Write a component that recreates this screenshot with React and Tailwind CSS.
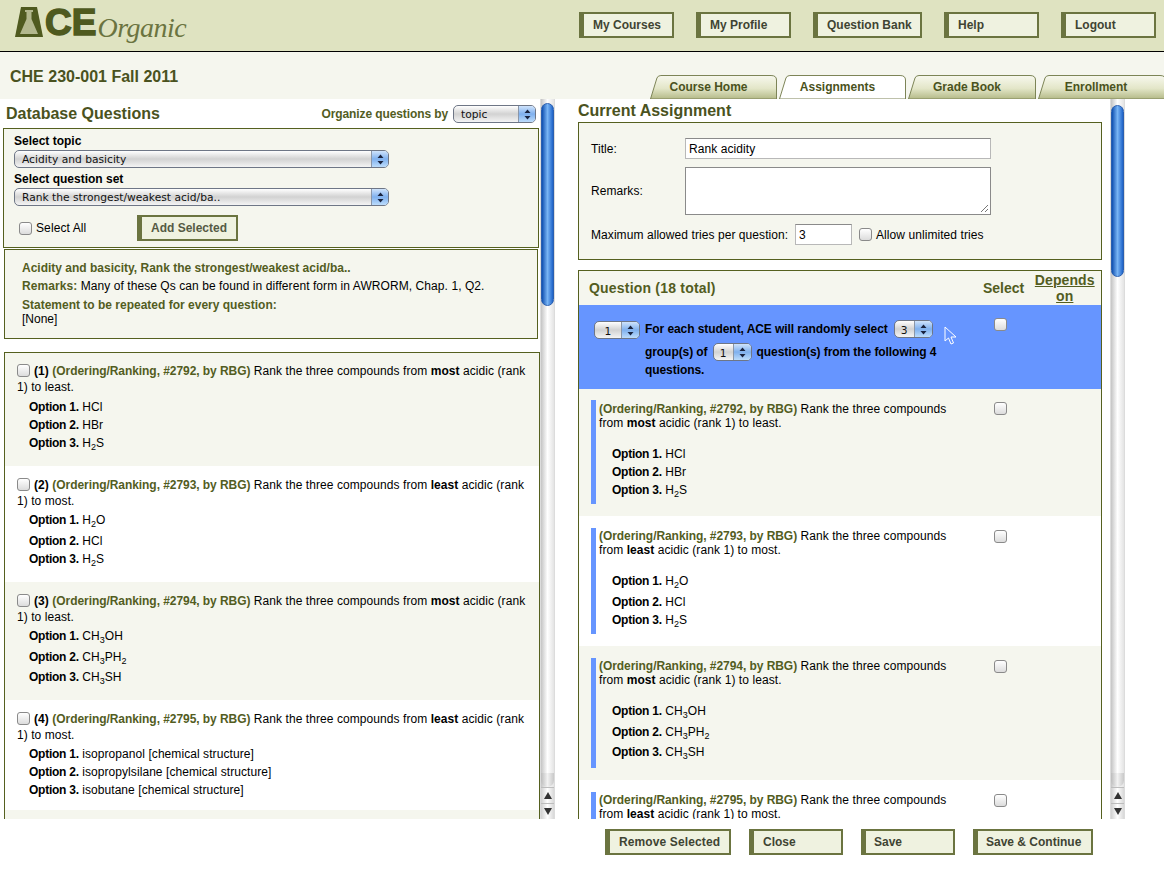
import React from "react";

const options = {
  q1: [["HCl"], ["HBr"], ["H", "2", "S"]],
  q2: [["H", "2", "O"], ["HCl"], ["H", "2", "S"]],
  q3: [["CH", "3", "OH"], ["CH", "3", "PH", "2"], ["CH", "3", "SH"]],
  q4: [["isopropanol [chemical structure]"], ["isopropylsilane [chemical structure]"], ["isobutane [chemical structure]"]],
};

const questions = [
  { n: 1, id: 2792, dir: "most", end: "least", opts: options.q1 },
  { n: 2, id: 2793, dir: "least", end: "most", opts: options.q2 },
  { n: 3, id: 2794, dir: "most", end: "least", opts: options.q3 },
  { n: 4, id: 2795, dir: "least", end: "most", opts: options.q4 },
];

// alternating H2O style pieces: even index is plain, odd index is a subscript
const Formula = ({ parts }) => (
  <>
    {parts.map((p, i) =>
      i % 2 ? (
        <sub key={i} className="static align-sub text-[9px] leading-[14px]">
          {p}
        </sub>
      ) : (
        <span key={i}>{p}</span>
      )
    )}
  </>
);

const OptionList = ({ opts, className = "" }) => (
  <div className={className}>
    {opts.map((o, i) => (
      <div key={i}>
        <b className="tracking-[-0.25px]">Option {i + 1}.</b> <Formula parts={o} />
      </div>
    ))}
  </div>
);

const Check = ({ className = "" }) => (
  <span
    className={`inline-block w-[13px] h-[13px] rounded-[3px] border border-[#8a8a8a] bg-gradient-to-b from-white to-[#dcdcdc] shrink-0 ${className}`}
  />
);

const Btn = ({ children, className = "" }) => (
  <div
    className={`h-[26px] flex items-center border-[#6b7440] border-y-[2px] border-r-[2px] border-l-[5px] bg-[#eff2e0] text-[#3f4433] font-bold text-[12px] ${className}`}
  >
    {children}
  </div>
);

const Arrows = () => (
  <svg width="7" height="11" viewBox="0 0 7 11" className="shrink-0">
    <path d="M3.5 0.5 L6.5 4 L0.5 4 Z M3.5 10.5 L6.5 7 L0.5 7 Z" fill="#1a2440" />
  </svg>
);

const AquaSelect = ({ label, className = "", btn = "w-[17px]", center = false }) => (
  <div
    className={`flex h-[18px] rounded-[5px] border border-[#6e7686] overflow-hidden bg-gradient-to-b from-white via-[#d2d2d2] to-[#f4f4f4] font-['DejaVu_Sans',sans-serif] font-normal tracking-normal text-[10.7px] text-[#111] ${className}`}
  >
    <div className={`flex-1 flex items-center pt-[2px] ${center ? "justify-center" : "pl-[7px]"} truncate`}>{label}</div>
    <div className={`${btn} flex items-center justify-center bg-gradient-to-b from-[#cfe3fb] via-[#7fb0ee] to-[#bcdcfb] border-l border-[#8a96a8]`}>
      <Arrows />
    </div>
  </div>
);

const Tab = ({ label, active, className = "" }) => (
  <div className={`relative h-[24px] flex items-center justify-center font-bold text-[12px] text-[#4a5220] ${className}`}>
    <svg className="absolute inset-0 w-full h-full" viewBox="0 0 128 24" preserveAspectRatio="none">
      <defs>
        <linearGradient id="tabOff" x1="0" y1="0" x2="0" y2="1">
          <stop offset="0" stopColor="#f7f8ee" />
          <stop offset="0.55" stopColor="#e3e6c8" />
          <stop offset="1" stopColor="#b4ba88" />
        </linearGradient>
      </defs>
      <path
        d="M0.5 24 L7 3 Q8 0.5 11 0.5 L122 0.5 Q127.5 0.5 127.5 5 L127.5 24 Z"
        fill={active ? "#ffffff" : "url(#tabOff)"}
        stroke="#7c8456"
        strokeWidth="1"
      />
    </svg>
    <span className="relative">{label}</span>
  </div>
);

const Scrollbar = ({ thumbTop, thumbHeight, className = "" }) => (
  <div className={`w-[15px] shrink-0 flex flex-col bg-gradient-to-r from-[#c4c4c4] via-white to-[#e4e4e4] border-x border-[#dcdcdc] ${className}`}>
    <div className="flex-1 flex flex-col">
      <div style={{ height: thumbTop }} className="shrink-0" />
      <div
        style={{ height: thumbHeight }}
        className="rounded-full bg-gradient-to-r from-[#0b4fb0] via-[#78b4f4] to-[#1c62c8] border border-[#2a5fb0] shrink-0"
      />
      <div className="flex-1" />
      <div className="h-[14px] rounded-b-full bg-gradient-to-r from-[#bcbcbc] via-[#f2f2f2] to-[#c8c8c8]" />
    </div>
    <div className="h-[16px] flex items-center justify-center border-t border-[#bdbdbd] bg-gradient-to-r from-[#d0d0d0] via-white to-[#d8d8d8]">
      <svg width="8" height="7" viewBox="0 0 8 7"><path d="M4 0 L8 7 L0 7 Z" fill="#333" /></svg>
    </div>
    <div className="h-[16px] flex items-center justify-center border-t border-[#bdbdbd] bg-gradient-to-r from-[#d0d0d0] via-white to-[#d8d8d8]">
      <svg width="8" height="7" viewBox="0 0 8 7"><path d="M4 7 L8 0 L0 0 Z" fill="#333" /></svg>
    </div>
  </div>
);

const Logo = () => (
  <div className="flex items-start ml-[15px] mt-[6px] h-[42px] select-none">
    <svg width="28" height="31" viewBox="0 0 28 31" className="mt-[1px]">
      <path d="M6 0 L22 0 L28 30 L0 30 Z" fill="#4f5a1f" />
      <path d="M10 3 L18 3 L18 5 L16.5 5 L16.5 12 L23 27 L5 27 L11.5 12 L11.5 5 L10 5 Z" fill="#b3b88e" />
    </svg>
    <span className="font-['Liberation_Sans',sans-serif] font-bold text-[37px] leading-[33px] text-[#4f5a1f] [-webkit-text-stroke:1.5px_#4f5a1f] ml-[2px]">
      CE
    </span>
    <span className="font-['Liberation_Serif',serif] italic text-[28px] leading-[40px] text-[#6b7440] ml-[1px] mt-[2px] tracking-[-0.5px]">
      Organic
    </span>
  </div>
);

const Stem = ({ q }) => (
  <>
    <b className="text-[#535d1f] tracking-[-0.06px]">(Ordering/Ranking, #{q.id}, by RBG)</b> Rank the three compounds from{" "}
    <b>{q.dir}</b> acidic (rank 1) to {q.end}.
  </>
);

const LeftRow = ({ q, index }) => (
  <div className={`pl-[12px] pr-[8px] ${index === 0 ? "pt-[10px]" : "pt-[11px]"} ${index === 3 ? "pb-[11px]" : "pb-[12px]"} leading-[16px] tracking-[0.07px] ${index % 2 ? "bg-white" : "bg-[#f5f6ee]"}`}>
    <div>
      <Check className="align-[-2px] mr-[4px]" />
      <b>({q.n})</b> <Stem q={q} />
    </div>
    <OptionList opts={q.opts} className={`${index === 0 ? "mt-[3px]" : "mt-[2px]"} ml-[12px] leading-[18px]`} />
  </div>
);

const RightRow = ({ q, index }) => (
  <div className={`flex pl-[12px] ${index === 0 ? "pt-[11px]" : "pt-[12px]"} pb-[12px] tracking-[0.07px] ${index % 2 ? "bg-white" : "bg-[#f5f6ee]"}`}>
    <div className={`w-[371px] shrink-0 border-l-[5px] border-[#6695ff] pl-[3px] ${index === 0 ? "pt-[2px]" : "pt-[1px]"} ${index === 2 ? "pb-[5px]" : "pb-[3px]"} leading-[14px]`}>
      <div className="w-[360px]">
        <Stem q={q} />
      </div>
      <OptionList opts={q.opts} className="mt-[15px] ml-[13px] leading-[18px]" />
    </div>
    <Check className="ml-[32px] mt-[2px]" />
  </div>
);

export default function App() {
  return (
    <div className="w-[1164px] h-[871px] overflow-hidden bg-white flex flex-col font-['Liberation_Sans',Arial,sans-serif] text-[12px] text-black">
      {/* top bar */}
      <header className="h-[52px] shrink-0 bg-[#dfe3c1] border-b border-black flex justify-between">
        <Logo />
        <nav className="flex gap-[22px] pt-[12px] pr-[8px]">
          <Btn className="w-[95px] pl-[9px]">My Courses</Btn>
          <Btn className="w-[95px] pl-[9px]">My Profile</Btn>
          <Btn className="w-[109px] pl-[9px]">Question Bank</Btn>
          <Btn className="w-[95px] pl-[9px]">Help</Btn>
          <Btn className="w-[95px] pl-[9px]">Logout</Btn>
        </nav>
      </header>

      {/* course title and tabs */}
      <div className="h-[47px] shrink-0 bg-[#f5f6ee] flex justify-between">
        <h1 className="pl-[10px] pt-[15px] text-[16px] leading-[20px] font-bold text-[#4a5220]">CHE 230-001 Fall 2011</h1>
        <div className="flex items-end gap-[2px] -mr-[2px]">
          <Tab label="Course Home" className="w-[127px] pr-[10px]" />
          <Tab label="Assignments" active className="w-[127px] pr-[10px]" />
          <Tab label="Grade Book" className="w-[128px] pr-[10px]" />
          <Tab label="Enrollment" className="w-[128px] pr-[12px]" />
        </div>
      </div>

      {/* panels */}
      <main className="h-[720px] shrink-0 flex">
        <section className="w-[540px] shrink-0 overflow-hidden">
          <div className="h-[29px] flex items-center justify-between pl-[6px] pr-[4px] pt-[1px]">
            <h2 className="text-[16px] font-bold text-[#4a5220]">Database Questions</h2>
            <div className="flex items-center gap-[5px]">
              <b className="text-[#535d1f] tracking-[-0.1px]">Organize questions by</b>
              <AquaSelect label="topic" className="w-[83px]" />
            </div>
          </div>
          <div className="ml-[3px] mr-[1px] h-[120px] border border-[#55601f] bg-[#f5f6ee] pl-[10px] pt-[4px]">
            <b className="block leading-[16px]">Select topic</b>
            <AquaSelect label="Acidity and basicity" className="w-[375px] mt-[1px]" />
            <b className="block leading-[16px] mt-[3px]">Select question set</b>
            <AquaSelect label="Rank the strongest/weakest acid/ba.." className="w-[375px] mt-[1px]" />
            <div className="flex items-center mt-[9px]">
              <Check className="ml-[5px]" />
              <span className="ml-[4px] w-[51px] tracking-[0.1px]">Select All</span>
              <Btn className="ml-[50px] w-[101px] pl-[9px] text-[#555a44]">Add Selected</Btn>
            </div>
          </div>
          <div className="mt-[1px] ml-[4px] mr-[2px] h-[90px] border border-[#55601f] bg-[#f5f6ee] pl-[17px] pt-[11px] leading-[14px]">
            <b className="block text-[#535d1f]">Acidity and basicity, Rank the strongest/weakest acid/ba..</b>
            <div className="mt-[4px] tracking-[0.07px]">
              <b className="text-[#535d1f]">Remarks:</b> Many of these Qs can be found in different form in AWRORM, Chap. 1, Q2.
            </div>
            <b className="block mt-[5px] text-[#535d1f]">Statement to be repeated for every question:</b>
            <div>[None]</div>
          </div>
          <div className="mt-[13px] ml-[4px] border-t border-x border-[#55601f]">
            {questions.map((q, i) => (
              <LeftRow key={q.id} q={q} index={i} />
            ))}
            <div className="h-[40px] bg-[#f5f6ee]" />
          </div>
        </section>

        <Scrollbar thumbTop={4} thumbHeight={203} />

        <section className="w-[524px] shrink-0 ml-[23px] overflow-hidden">
          <h2 className="h-[23px] flex items-center text-[16px] font-bold text-[#4a5220]">Current Assignment</h2>
          <div className="h-[138px] border border-[#55601f] bg-[#f5f6ee] pl-[12px] pt-[15px] tracking-[0.07px]">
            <div className="flex">
              <span className="w-[94px] pt-[2px]">Title:</span>
              <div className="w-[306px] h-[21px] border border-[#b8b8b8] border-t-[#8a8a8a] bg-white pl-[3px] flex items-center">Rank acidity</div>
            </div>
            <div className="flex items-center mt-[8px]">
              <span className="w-[94px]">Remarks:</span>
              <div className="relative w-[306px] h-[48px] border border-[#8a8a8a] bg-white">
                <svg width="9" height="9" viewBox="0 0 9 9" className="absolute right-[1px] bottom-[1px]">
                  <path d="M1 8 L8 1 M5 8 L8 5" stroke="#777" strokeWidth="1" />
                </svg>
              </div>
            </div>
            <div className="flex items-center mt-[9px]">
              <span className="w-[204px] shrink-0 whitespace-nowrap">Maximum allowed tries per question:</span>
              <div className="w-[57px] h-[21px] border border-[#b8b8b8] border-t-[#8a8a8a] bg-white pl-[3px] flex items-center">3</div>
              <Check className="ml-[7px]" />
              <span className="ml-[4px]">Allow unlimited tries</span>
            </div>
          </div>
          <div className="mt-[10px] h-[549px] border-t border-x border-[#55601f] overflow-hidden">
            <div className="h-[34px] flex items-center bg-[#f5f6ee] text-[14px] font-bold text-[#535d1f]">
              <span className="pl-[10px] w-[404px] tracking-[0.2px]">Question (18 total)</span>
              <span>Select</span>
              <span className="ml-[10px] w-[61px] text-center underline leading-[16px] tracking-[0.1px]">Depends on</span>
            </div>
            <div className="relative h-[84px] flex bg-[#6695ff] font-bold leading-[17px] tracking-[-0.07px]">
              <div className="pl-[15px] pt-[16px]">
                <AquaSelect label="1" center btn="w-[18px]" className="w-[46px]" />
              </div>
              <div className="ml-[5px] w-[320px] pt-[15px]">
                <div className="flex items-center h-[18px]">
                  For each student, ACE will randomly select
                  <AquaSelect label="3" center btn="w-[18px]" className="w-[39px] ml-[6px] shrink-0" />
                </div>
                <div className="flex items-center h-[18px] mt-[5px]">
                  group(s) of
                  <AquaSelect label="1" center btn="w-[18px]" className="w-[39px] mx-[5px] shrink-0" />
                  question(s) from the following 4
                </div>
                <div className="mt-[1px]">questions.</div>
              </div>
              <Check className="ml-[29px] mt-[13px]" />
              {/* mouse pointer */}
              <svg width="13" height="19" viewBox="0 0 13 19" className="absolute left-[365px] top-[21px]">
                <path d="M1 1 L1 15 L4.5 12 L7 18 L9.5 17 L7 11 L12 11 Z" fill="#6695ff" stroke="#fff" strokeWidth="1" />
              </svg>
            </div>
            {questions.map((q, i) => (
              <RightRow key={q.id} q={q} index={i} />
            ))}
          </div>
        </section>

        <Scrollbar thumbTop={6} thumbHeight={172} className="ml-[8px]" />
      </main>

      {/* bottom buttons */}
      <footer className="flex pl-[605px] pt-[10px] gap-[18px]">
        <Btn className="w-[126px] pl-[9px] tracking-[0.12px]">Remove Selected</Btn>
        <Btn className="w-[94px] pl-[9px]">Close</Btn>
        <Btn className="w-[94px] pl-[8px]">Save</Btn>
        <Btn className="w-[120px] pl-[8px]">Save &amp; Continue</Btn>
      </footer>
    </div>
  );
}
